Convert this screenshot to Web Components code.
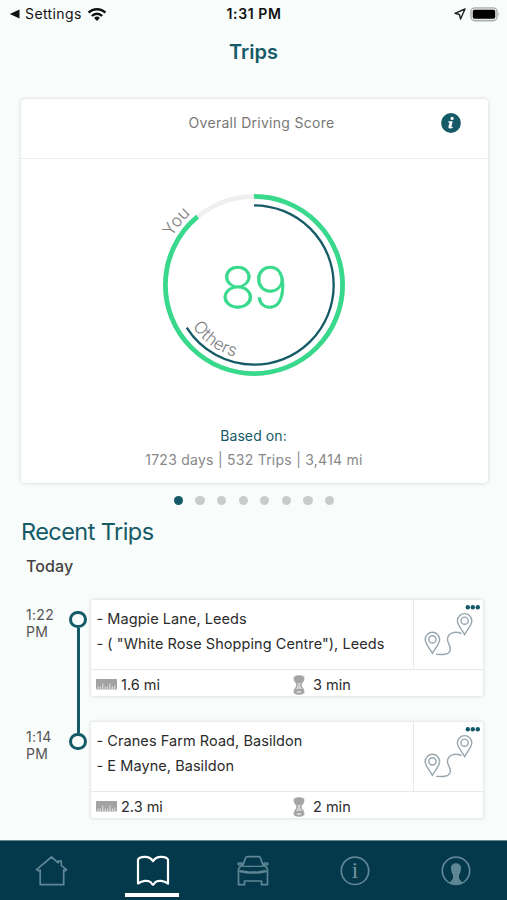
<!DOCTYPE html>
<html lang="en">
<head>
<meta charset="utf-8">
<title>Trips</title>
<style>
  body {
    margin: 0;
    background: #f8fcfb;
    font-family: Inter, "Liberation Sans", sans-serif;
    color: #2b2b2b;
    --teal: #155a67;
  }
</style>
</head>
<body>
<trips-app></trips-app>

<script>
class StatusBar extends HTMLElement {
  constructor() {
    super();
    this.attachShadow({ mode: 'open' });
  }

  connectedCallback() {
    this.shadowRoot.innerHTML = `
      <style>
        :host {
          display: grid;
          grid-template-columns: 1fr auto 1fr;
          align-items: center;
          height: 28px;
          padding: 0 7px 0 9px;
          color: #111;
          font-size: 14px;
          line-height: 28px;
        }
        .left, .right { display: flex; align-items: center; }
        .left span { margin: 0 5px 0 5px; letter-spacing: 0.4px; }
        .right { justify-content: flex-end; gap: 4px; margin-right: -1px; }
        .time { font-weight: 600; letter-spacing: 0.6px; margin-left: -1px; }
        svg { display: block; }
      </style>
      <div class="left">
        <svg width="11" height="10" viewBox="0 0 11 10"><path d="M10.5 .5v9L.8 5z" fill="#111"/></svg>
        <span>Settings</span>
        <svg width="20" height="15" viewBox="0 0 20 15" fill="none" stroke="#111" stroke-width="2.5">
          <path d="M1.6 5.7a11.7 11.7 0 0 1 16.8 0"/>
          <path d="M4.9 9a7.1 7.1 0 0 1 10.2 0"/>
          <path d="M10 14l-2.9-3a4.2 4.2 0 0 1 5.8 0z" fill="#111" stroke="none"/>
        </svg>
      </div>
      <div class="time">1:31 PM</div>
      <div class="right">
        <svg width="12" height="12" viewBox="0 0 12 12"><path d="M11 1L1 5.3l4.4 1.2L6.6 11z" fill="none" stroke="#222" stroke-width="1.4" stroke-linejoin="round"/></svg>
        <svg width="31" height="15" viewBox="0 0 31 15">
          <rect x=".9" y=".9" width="26.2" height="12.8" rx="4" fill="#e5e8e7" stroke="#a9adac" stroke-width="1.4"/>
          <rect x="2.8" y="2.8" width="22.4" height="9" rx="1.8" fill="#000"/>
          <path d="M28.6 5.1q1.8 2.2 0 4.4z" fill="#a9adac"/>
        </svg>
      </div>
    `;
  }
}

class ScoreRing extends HTMLElement {
  constructor() {
    super();
    this.attachShadow({ mode: 'open' });
  }

  connectedCallback() {
    const score = this.getAttribute('score');
    const others = this.getAttribute('others');
    this.shadowRoot.innerHTML = `
      <style>
        :host { display: block; }
        svg { display: block; overflow: visible; }
        circle { fill: none; }
        .label { font-size: 17px; font-weight: 350; fill: #808080; }
        .score { font-size: 57px; font-weight: 200; letter-spacing: -2.5px; fill: #38d98c; stroke: #38d98c; stroke-width: .5; }
      </style>
      <svg width="182" height="182" viewBox="-91 -91 182 182">
        <defs>
          <path id="outer" d="M-94.2 -13A95.2 95.2 0 0 1 0 -95.2"/>
          <path id="inner" d="M-61.5 41.5A74.5 74.5 0 0 0 0 74.5"/>
        </defs>
        <circle r="88.6" stroke="#eeefee" stroke-width="4.8"/>
        <circle r="88.6" stroke="#38d98c" stroke-width="4.8" pathLength="100" stroke-dasharray="${score} 100" transform="rotate(-90)"/>
        <circle r="79.7" stroke="#155a67" stroke-width="2.3" pathLength="100" stroke-dasharray="${others} 100" transform="rotate(-90)"/>
        <text class="label"><textPath href="#outer" startOffset="37">You</textPath></text>
        <text class="label"><textPath href="#inner" startOffset="0">Others</textPath></text>
        <text class="score" x="-1.3" y="22.5" text-anchor="middle" transform="scale(1.05 1)">${score}</text>
      </svg>
    `;
  }
}

class ScoreCard extends HTMLElement {
  constructor() {
    super();
    this.attachShadow({ mode: 'open' });
  }

  connectedCallback() {
    this.shadowRoot.innerHTML = `
      <style>
        :host {
          display: flex;
          flex: none;
          flex-direction: column;
          align-items: center;
          height: 384.5px;
          margin: 0 19px 0 21px;
          background: #fff;
          border-radius: 4px;
          box-shadow: 0 0 3px 1px #dfe4e3;
        }
        header {
          box-sizing: border-box;
          width: 100%;
          height: 60px;
          padding: 0 27px 11px;
          display: grid;
          grid-template-columns: 20px 1fr 20px;
          align-items: center;
          border-bottom: 1.5px solid #ececec;
          color: #777;
          font-size: 14px;
          letter-spacing: 0.28px;
        }
        header span { grid-column: 2; text-align: center; padding-left: 13px; margin-right: -1px; }
        ::slotted(score-ring) { margin: 35px 1px 0 0; }
        .based { margin: 50px 2px 0 0; color: var(--teal); font-size: 14px; line-height: 20px; letter-spacing: 0.1px; }
        .stats { margin: 4px 1px 0 0; color: #888; font-size: 14px; line-height: 20px; letter-spacing: 0.25px; }
      </style>
      <header>
        <span><slot name="title"></slot></span>
        <svg width="20" height="20" viewBox="0 0 20 20">
          <circle cx="10" cy="10" r="9.9" fill="#155a67"/>
          <circle cx="11.1" cy="5.4" r="1.6" fill="#fff"/>
          <path d="M7.5 8.3h4.2l-1.4 5.6q.5.2 1.5-.5l.4.6q-1.6 1.8-3.7 1.5-1.4-.4-1-2L8.6 9.4H7.2z" fill="#fff"/>
        </svg>
      </header>
      <slot></slot>
      <div class="based">Based on:</div>
      <div class="stats"><slot name="stats"></slot></div>
    `;
  }
}

class PageDots extends HTMLElement {
  constructor() {
    super();
    this.attachShadow({ mode: 'open' });
  }

  connectedCallback() {
    const count = Number(this.getAttribute('count'));
    this.shadowRoot.innerHTML = `
      <style>
        :host { display: flex; flex: none; justify-content: center; gap: 12.2px; margin: 12.5px 0 0 1px; height: 10px; }
        i { width: 9.4px; height: 9.4px; border-radius: 50%; background: #c9cccb; }
        i:first-of-type { background: var(--teal); }
      </style>
      ${'<i></i>'.repeat(count)}
    `;
  }
}

class TripRow extends HTMLElement {
  constructor() {
    super();
    this.attachShadow({ mode: 'open' });
  }

  connectedCallback() {
    this.shadowRoot.innerHTML = `
      <style>
        :host { display: flex; height: 122px; padding-left: 26px; }
        :host([last]) { height: 96px; }
        .time { width: 43px; padding-top: 5.5px; font-size: 14px; line-height: 17px; letter-spacing: 0.3px; color: #555; }
        .time span { display: block; width: 30px; }
        .rail { width: 18px; display: flex; flex-direction: column; align-items: center; padding-top: 11px; box-sizing: border-box; }
        .rail b { box-sizing: border-box; flex: none; width: 17.4px; height: 17.4px; border: 3px solid var(--teal); border-radius: 50%; }
        .rail i { flex: 1; width: 3px; background: var(--teal); margin-bottom: -11px; }
        :host([last]) .rail i { display: none; }
        .card {
          width: 392px;
          height: 96px;
          margin-left: 4px;
          display: flex;
          flex-direction: column;
          background: #fff;
          border-radius: 2px;
          box-shadow: 0 0 3px 1px #dfe4e3;
        }
        .top { display: flex; height: 69px; border-bottom: 1.5px solid #e8eaea; }
        .places { flex: 1; padding: 6px 0 0 5.5px; font-size: 14.5px; line-height: 25px; letter-spacing: 0.06px; white-space: nowrap; }
        .places div { height: 25px; }
        .map { width: 69px; border-left: 1.5px solid #e8eaea; }
        .foot { flex: 1; display: flex; align-items: center; font-size: 14.5px; padding: 3px 0 0 5px; }
        .foot div { display: flex; flex: none; align-items: center; gap: 4px; width: 197px; }
        .foot div + div { flex: 1; gap: 8px; }
        svg { display: block; flex: none; }
      </style>
      <div class="time"><span>${this.getAttribute('time')}</span></div>
      <div class="rail"><b></b><i></i></div>
      <div class="card">
        <div class="top">
          <div class="places">
            <div><slot name="from"></slot></div>
            <div><slot name="to"></slot></div>
          </div>
          <div class="map">
            <svg width="69" height="68" viewBox="0 0 69 68" fill="none" stroke="#98a6af" stroke-width="1.4">
              <g fill="#155a67" stroke="none"><circle cx="53.8" cy="7.3" r="2.2"/><circle cx="58.8" cy="7.3" r="2.2"/><circle cx="63.8" cy="7.3" r="2.2"/></g>
              <path d="M18.4 53.3C15.5 47.8 11.2 44 11.2 39.5a7.2 7.2 0 0 1 14.4 0C25.6 44 21.3 47.8 18.4 53.3z"/>
              <circle cx="18.4" cy="39.4" r="3.6"/>
              <path d="M50.6 34.6C47.7 29.1 43.4 25.3 43.4 20.8a7.2 7.2 0 0 1 14.4 0C57.8 25.3 53.5 29.1 50.6 34.6z"/>
              <circle cx="50.6" cy="20.7" r="3.6"/>
              <path d="M47.5 33.5C41 31 34.5 32.5 33.5 38.5C32.7 43.5 38 46 36 51C34 55 28.5 54.7 22 54.4"/>
            </svg>
          </div>
        </div>
        <div class="foot">
          <div>
            <svg width="21" height="11" viewBox="0 0 21 11">
              <rect width="21" height="10.5" rx=".8" fill="#a2a2a2"/>
              <path d="M2 10.5V7.5M4.4 10.5V7.5M6.8 10.5V4.7M9.2 10.5V7.5M11.6 10.5V7.5M14 10.5V4.7M16.4 10.5V7.5M18.8 10.5V6.5" stroke="#e7e7e7" stroke-width="1"/>
            </svg>
            ${this.getAttribute('distance')}
          </div>
          <div>
            <svg width="12" height="20" viewBox="0 0 12 20">
              <path d="M1 3Q1 .8 6 .8T11 3Q11 6 8.6 8.300Q7.600 10 8.600 11.700Q11 14 11 17Q11 19.200 6 19.200T1 17Q1 14 3.400 11.700Q4.400 10 3.400 8.300Q1 6 1 3z" fill="#a4a4a4" stroke="#a4a4a4"/>
              <path d="M4.400 8h3.200Q6.200 10 7.800 12.500L8.800 14.300Q6 12.800 3.200 14.300L4.200 12.500Q5.800 10 4.400 8zM3.200 17Q6 15.400 8.800 17Q6 18.400 3.200 17z" fill="#f2f2f2"/>
              <path d="M6 8v5.500" stroke="#a4a4a4" stroke-width=".9"/>
            </svg>
            ${this.getAttribute('duration')}
          </div>
        </div>
      </div>
    `;
  }
}

class TabBar extends HTMLElement {
  constructor() {
    super();
    this.attachShadow({ mode: 'open' });
  }

  connectedCallback() {
    this.shadowRoot.innerHTML = `
      <style>
        :host {
          display: grid;
          grid-template-columns: repeat(5, 1fr);
          height: 60px;
          background: #04394b;
          box-shadow: inset 0 1px #64838d;
        }
        div { display: flex; flex-direction: column; align-items: center; padding-top: 14px; }
        svg { display: block; fill: none; stroke: #5f8694; stroke-width: 1.7; stroke-linejoin: round; stroke-linecap: round; }
        .active svg { stroke: #fff; stroke-width: 2.2; margin-left: 1px; }
        .active::after { content: ''; width: 54px; height: 4px; margin-top: 6px; background: #fff; }
        text { font: 23px "Liberation Serif", serif; fill: #7795a0; stroke: none; }
      </style>
      <div>
        <svg width="34" height="33" viewBox="0 0 34 33"><path d="M2.5 15.6L17.5 3l6.8 5.8V7.2h3v4.2L32.5 15.6l-1.2 1.2-1.6-.8v14.7H6.2V16l-1.7.8z"/></svg>
      </div>
      <div class="active">
        <svg width="34" height="33" viewBox="0 0 34 33"><path d="M17 7.2C13.5 1.3 4 2.3 2 5.5V29.5C6 26.5 12.5 25.8 15 28.5q1.5 2.5 2 2.5.5 0 2-2.5C21.5 25.8 28 26.5 32 29.5V5.5C30 2.3 20.5 1.3 17 7.2z"/></svg>
      </div>
      <div>
        <svg width="34" height="33" viewBox="0 0 34 33">
          <path d="M7 11L9.5 4Q10 2.7 11.5 2.7h11Q24 2.7 24.5 4L27 11q4.5 2 4.5 5v14.7h-6V27h-17v3.7h-6V16Q2.5 13 7 11z"/>
          <path d="M7 11H3.2q-1.5-.5-.8-2h3.2zM27 11h3.8q1.5-.5.8-2h-3.2z"/>
          <path d="M7 12.3h20" stroke-width="1.2"/>
          <path d="M4.5 17.2l7.5 1.3M29.5 17.2l-7.5 1.3M14 18.5h6" stroke-width="2.6"/>
        </svg>
      </div>
      <div>
        <svg width="34" height="33" viewBox="0 0 34 33"><circle cx="17" cy="16.8" r="13.7"/><text x="17" y="23.5" text-anchor="middle">i</text></svg>
      </div>
      <div>
        <svg width="34" height="33" viewBox="0 0 34 33"><circle cx="17" cy="16.8" r="13.7"/><path d="M17 9.2c3.5 0 5.2 2.3 5 5.5c-.2 3-1 4.8-2 6.2V24.5l3.5 4.3Q17 31.5 10.5 28.8L14 24.5V20.9c-1-1.4-1.8-3.2-2-6.2c-.2-3.2 1.5-5.5 5-5.5z" fill="#5f8694" stroke="none"/></svg>
      </div>
    `;
  }
}

class TripsApp extends HTMLElement {
  constructor() {
    super();
    this.attachShadow({ mode: 'open' });
  }

  connectedCallback() {
    this.shadowRoot.innerHTML = `
      <style>
        :host { display: flex; flex-direction: column; height: 900px; overflow: hidden; }
        h1, h2, h3 { margin: 0; flex: none; }
        status-bar, trip-row, tab-bar { flex: none; }
        h1 { height: 48px; margin: 0 0 22.5px; text-align: center; font-size: 20px; line-height: 48px; font-weight: 600; color: var(--teal); }
        h2 { margin: 9px 0 0 21px; font-size: 23.5px; line-height: 34px; font-weight: 400; color: var(--teal); letter-spacing: -0.57px; }
        h3 { margin: 5px 0 22.5px 26px; font-size: 16px; line-height: 24px; font-weight: 500; color: #444; letter-spacing: 0.1px; }
        tab-bar { margin-top: auto; }
      </style>
      <status-bar></status-bar>
      <h1>Trips</h1>
      <score-card>
        <span slot="title">Overall Driving Score</span>
        <score-ring score="89" others="66"></score-ring>
        <span slot="stats">1723 days | 532 Trips | 3,414 mi</span>
      </score-card>
      <page-dots count="8"></page-dots>
      <h2>Recent Trips</h2>
      <h3>Today</h3>
      <trip-row time="1:22 PM" distance="1.6 mi" duration="3 min">
        <span slot="from">- Magpie Lane, Leeds</span>
        <span slot="to">- ( "White Rose Shopping Centre"), Leeds</span>
      </trip-row>
      <trip-row time="1:14 PM" distance="2.3 mi" duration="2 min" last>
        <span slot="from">- Cranes Farm Road, Basildon</span>
        <span slot="to">- E Mayne, Basildon</span>
      </trip-row>
      <tab-bar></tab-bar>
    `;
  }
}

customElements.define('status-bar', StatusBar);
customElements.define('score-ring', ScoreRing);
customElements.define('score-card', ScoreCard);
customElements.define('page-dots', PageDots);
customElements.define('trip-row', TripRow);
customElements.define('tab-bar', TabBar);
customElements.define('trips-app', TripsApp);
</script>
</body>
</html>
